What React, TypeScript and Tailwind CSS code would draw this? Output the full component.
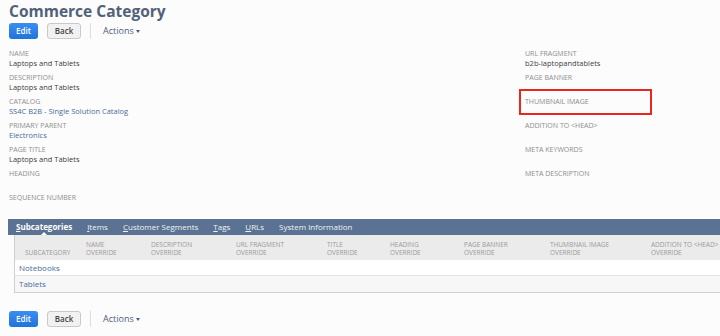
import React from "react";

const font = { fontFamily: '"Open Sans", "Liberation Sans", sans-serif' };

function Field({ label, value, link, boxed }: { label: string; value?: string; link?: boolean; boxed?: boolean }) {
  return (
    <div className="relative h-[24px]">
      <div className="text-[7px] leading-[9px] uppercase text-[#8d8d8d]">{label}</div>
      {value && (
        <div className={`text-[7.5px] leading-[10px] ${link ? "text-[#4a6b98]" : "text-[#3d3d3d]"}`}>{value}</div>
      )}
      {boxed && <div className="absolute left-[-6px] top-[-8px] w-[133px] h-[26px] border-2 border-[#e8261f]" />}
    </div>
  );
}

function Buttons() {
  return (
    <div className="flex items-center h-[16px]">
      <button className="w-[29px] h-[16px] rounded-[3px] bg-gradient-to-b from-[#3b8ef0] to-[#1f73dc] text-white text-[8px] font-semibold leading-none">Edit</button>
      <button className="ml-[9px] w-[34px] h-[16px] rounded-[3px] bg-[#f1f1f1] border border-[#c9c9c9] text-[#444] text-[8px] font-semibold leading-none">Back</button>
      <div className="ml-[9px] w-px h-[16px] bg-[#dcdcdc]" />
      <div className="ml-[12px] flex items-center text-[9px] text-[#4b5d7a]">
        Actions
        <span className="ml-[2px] w-0 h-0 border-l-[2.5px] border-r-[2.5px] border-t-[3px] border-l-transparent border-r-transparent border-t-[#4b5d7a]" />
      </div>
    </div>
  );
}

const cols = [
  { w: 66, l1: "", l2: "SUBCATEGORY", pl: 10 },
  { w: 65, l1: "NAME", l2: "OVERRIDE", pl: 5 },
  { w: 85, l1: "DESCRIPTION", l2: "OVERRIDE", pl: 5 },
  { w: 91, l1: "URL FRAGMENT", l2: "OVERRIDE", pl: 5 },
  { w: 63, l1: "TITLE", l2: "OVERRIDE", pl: 5 },
  { w: 74, l1: "HEADING", l2: "OVERRIDE", pl: 5 },
  { w: 86, l1: "PAGE BANNER", l2: "OVERRIDE", pl: 5 },
  { w: 101, l1: "THUMBNAIL IMAGE", l2: "OVERRIDE", pl: 5 },
  { w: 75, l1: "ADDITION TO <HEAD>", l2: "OVERRIDE", pl: 5 },
];

function Tab({ first, rest, bold }: { first: string; rest: string; bold?: boolean }) {
  return (
    <span className={`text-[8px] ${bold ? "font-bold text-white" : "text-[#eef2f7]"}`}>
      <span className="underline underline-offset-1">{first}</span>
      {rest}
    </span>
  );
}

export default function App() {
  return (
    <div className="w-[720px] h-[336px] overflow-hidden bg-[#fcfcfc]" style={font}>
      <div className="pl-[9px]">
        <div className="text-[15.5px] leading-[20px] font-bold text-[#52617a] pt-[1px]">Commerce Category</div>
        <div className="mt-[2px]">
          <Buttons />
        </div>
        <div className="mt-[10px] flex">
          <div className="w-[516px]">
            <Field label="Name" value="Laptops and Tablets" />
            <Field label="Description" value="Laptops and Tablets" />
            <Field label="Catalog" value="SS4C B2B - Single Solution Catalog" link />
            <Field label="Primary Parent" value="Electronics" link />
            <Field label="Page Title" value="Laptops and Tablets" />
            <Field label="Heading" />
            <Field label="Sequence Number" />
          </div>
          <div className="flex-1">
            <Field label="URL Fragment" value="b2b-laptopandtablets" />
            <Field label="Page Banner" />
            <Field label="Thumbnail Image" boxed />
            <Field label="Addition to <Head>" />
            <Field label="Meta Keywords" />
            <Field label="Meta Description" />
          </div>
        </div>
      </div>
      <div className="ml-[8px] mt-[2px]">
        <div className="relative h-[16px] bg-[#5b7292] flex items-center gap-[15px] pl-[8px]">
          <Tab first="S" rest="ubcategories" bold />
          <Tab first="I" rest="tems" />
          <Tab first="C" rest="ustomer Segments" />
          <Tab first="T" rest="ags" />
          <Tab first="U" rest="RLs" />
          <span className="text-[8px] text-[#eef2f7]">System Information</span>
          <span className="absolute left-[33px] bottom-0 w-0 h-0 border-l-[3px] border-r-[3px] border-b-[3px] border-l-transparent border-r-transparent border-b-white" />
        </div>
        <div className="ml-[6px] border-l border-b border-[#cfcfcf]">
          <div className="flex h-[25px] bg-[#ebebeb]">
            {cols.map((c, i) => (
              <div key={i} className="shrink-0 flex flex-col justify-end pb-[3px] text-[6.5px] leading-[8px] text-[#9a9a9a]" style={{ width: c.w, paddingLeft: c.pl }}>
                {c.l1 && <div>{c.l1}</div>}
                <div>{c.l2}</div>
              </div>
            ))}
          </div>
          <div className="h-[16px] flex items-center pl-[4px] text-[8px] text-[#4a6b98] bg-white border-b border-[#e4e4e4]">Notebooks</div>
          <div className="h-[16px] flex items-center pl-[4px] text-[8px] text-[#4a6b98] bg-[#f7f7f7]">Tablets</div>
        </div>
      </div>
      <div className="pl-[9px] mt-[18px]">
        <Buttons />
      </div>
    </div>
  );
}
